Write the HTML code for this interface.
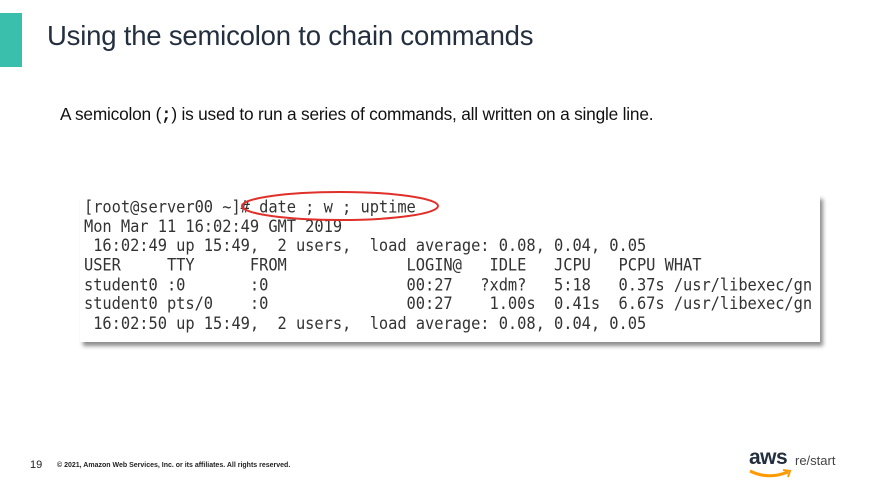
<!DOCTYPE html>
<html><head><style>
body{margin:0;width:885px;height:492px;background:#fff;position:relative;overflow:hidden;font-family:"Liberation Sans",sans-serif;}
.bar{position:absolute;left:0;top:13px;width:22px;height:54px;background:#3bbfad;}
.title{position:absolute;left:47px;top:20px;font-size:27.5px;color:#232f3e;white-space:nowrap;letter-spacing:-0.2px;}
.body{position:absolute;left:60px;top:104px;font-size:17.3px;color:#111;white-space:nowrap;letter-spacing:-0.2px;}
.term{position:absolute;left:80px;top:195px;width:740px;height:147px;background:#fff;box-shadow:3px 4px 4px rgba(0,0,0,0.45);}
.term pre{margin:0;position:absolute;left:4px;top:3px;font-family:"DejaVu Sans Mono","Liberation Mono",monospace;font-size:15.4px;line-height:17.65px;color:#333;letter-spacing:-0.05px;transform:scaleY(1.1);transform-origin:0 0;}
.foot{position:absolute;top:462px;font-size:7px;font-weight:bold;color:#222;left:57px;}
.num{position:absolute;left:30px;top:459px;font-size:11px;color:#222;}
</style></head><body>
<div class="bar"></div>
<div class="title">Using the semicolon to chain commands</div>
<div class="body">A semicolon (<b style="font-family:'Liberation Mono',monospace">;</b>) is used to run a series of commands, all written on a single line.</div>
<div class="term"><pre>[root@server00 ~]# date ; w ; uptime
Mon Mar 11 16:02:49 GMT 2019
 16:02:49 up 15:49,  2 users,  load average: 0.08, 0.04, 0.05
USER     TTY      FROM             LOGIN@   IDLE   JCPU   PCPU WHAT
student0 :0       :0               00:27   ?xdm?   5:18   0.37s /usr/libexec/gn
student0 pts/0    :0               00:27    1.00s  0.41s  6.67s /usr/libexec/gn
 16:02:50 up 15:49,  2 users,  load average: 0.08, 0.04, 0.05</pre></div>
<svg style="position:absolute;left:0;top:0" width="885" height="492"><ellipse cx="340" cy="206" rx="98" ry="14" fill="none" stroke="#e0302a" stroke-width="2"/></svg>
<div class="num">19</div>
<div class="foot">© 2021, Amazon Web Services, Inc. or its affiliates. All rights reserved.</div>
<div style="position:absolute;left:749px;top:446px;font-size:21px;font-weight:bold;color:#232f3e;letter-spacing:-0.5px">aws</div>
<div style="position:absolute;left:795px;top:453px;font-size:13px;color:#444">re/start</div>
<svg style="position:absolute;left:748px;top:468px" width="50" height="14"><path d="M2 3 Q20 12 40 4" fill="none" stroke="#f90" stroke-width="3"/><path d="M35 2 L42 3 L40 9" fill="none" stroke="#f90" stroke-width="2"/></svg>
</body></html>
